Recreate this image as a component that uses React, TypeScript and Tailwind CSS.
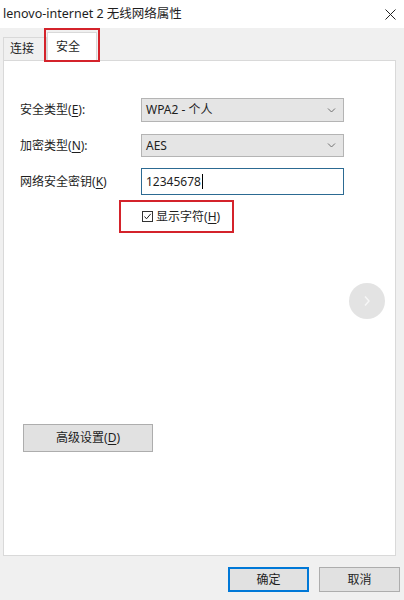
import React from 'react';

const FONT = '"Noto Sans", "Noto Sans CJK SC", sans-serif';

function Key({ k }: { k: string }) {
  return (
    <>
      (<span className="underline underline-offset-2">{k}</span>)
    </>
  );
}

function Chevron() {
  return (
    <svg width="9" height="5" viewBox="0 0 9 5" className="text-[#707070]">
      <path d="M1 0.5 L4.5 4 L8 0.5" fill="none" stroke="currentColor" strokeWidth="1" />
    </svg>
  );
}

function Select({ value }: { value: string }) {
  return (
    <div className="flex h-full w-[203px] items-center justify-between border border-[#b4b4b4] bg-[#e5e5e5] pl-[4px] pr-[7px]">
      <span>{value}</span>
      <Chevron />
    </div>
  );
}

export default function App() {
  return (
    <div
      className="flex h-[600px] w-[404px] flex-col bg-[#f0f0f0] text-[12px] text-[#1e1e1e]"
      style={{ fontFamily: FONT }}
    >
      {/* title bar */}
      <div className="flex h-[28px] items-center justify-between bg-white pl-[3px] pr-[8px]">
        <span className="text-[12.5px] leading-none">lenovo-internet 2 无线网络属性</span>
        <svg width="11" height="11" viewBox="0 0 11 11" className="text-[#222]">
          <path d="M0.5 0.5 L10.5 10.5 M10.5 0.5 L0.5 10.5" stroke="currentColor" strokeWidth="1" />
        </svg>
      </div>

      {/* tabs */}
      <div className="relative flex h-[32px] items-end pl-[3px]">
        <div className="flex h-[23px] w-[44px] items-center border border-b-0 border-[#d9d9d9] pl-[6px]">连接</div>
        <div className="relative z-10 -mb-px flex h-[29px] w-[50px] items-center border border-b-0 border-[#d9d9d9] bg-white pl-[8px]">
          安全
        </div>
        <div className="absolute left-[44px] top-0 z-20 h-[34px] w-[56px] border-2 border-[#d4232b]" />
      </div>

      {/* panel */}
      <div className="relative ml-[3px] flex h-[496px] w-[393px] flex-col border border-[#d9d9d9] bg-white pl-[16px] pt-[37px]">
        <div className="flex h-[24px] items-center">
          <span className="w-[121px]">
            安全类型<Key k="E" />:
          </span>
          <Select value="WPA2 - 个人" />
        </div>
        <div className="mt-[12px] flex h-[23px] items-center">
          <span className="w-[121px]">
            加密类型<Key k="N" />:
          </span>
          <Select value="AES" />
        </div>
        <div className="mt-[11px] flex h-[27px] items-center">
          <span className="w-[121px]">
            网络安全密钥<Key k="K" />
          </span>
          <div className="flex h-full w-[203px] items-center border border-[#2c6a92] bg-white pl-[4px]">
            <span>12345678</span>
            <span className="ml-px h-[15px] w-px bg-black" />
          </div>
        </div>

        <div className="ml-[99px] mt-[5px] flex h-[33px] w-[115px] items-center border-2 border-[#d4232b] pl-[21px]">
          <span className="flex h-[11px] w-[11px] shrink-0 items-center justify-center border border-[#333]">
            <svg width="9" height="9" viewBox="0 0 9 9">
              <path d="M1.5 4.5 L3.5 6.8 L7.8 1.8" fill="none" stroke="#222" strokeWidth="1" />
            </svg>
          </span>
          <span className="ml-[3px]">
            显示字符<Key k="H" />
          </span>
        </div>

        <button className="ml-[3px] mt-[191px] flex h-[28px] w-[130px] items-center justify-center border border-[#adadad] bg-[#e1e1e1]">
          高级设置<Key k="D" />
        </button>

        {/* floating page arrow */}
        <div className="absolute left-[345px] top-[222px] flex h-[36px] w-[36px] items-center justify-center rounded-full bg-[#e3e3e3]">
          <svg width="8" height="12" viewBox="0 0 8 12">
            <path d="M2 1.5 L6 6 L2 10.5" fill="none" stroke="#f7f7f7" strokeWidth="1.4" />
          </svg>
        </div>
      </div>

      {/* footer */}
      <div className="mt-[11px] flex justify-end gap-[10px] pr-[4px]">
        <button className="flex h-[25px] w-[81px] items-center justify-center border-2 border-[#0078d7] bg-[#e1e1e1]">
          确定
        </button>
        <button className="flex h-[25px] w-[81px] items-center justify-center border border-[#adadad] bg-[#e1e1e1]">
          取消
        </button>
      </div>
    </div>
  );
}
